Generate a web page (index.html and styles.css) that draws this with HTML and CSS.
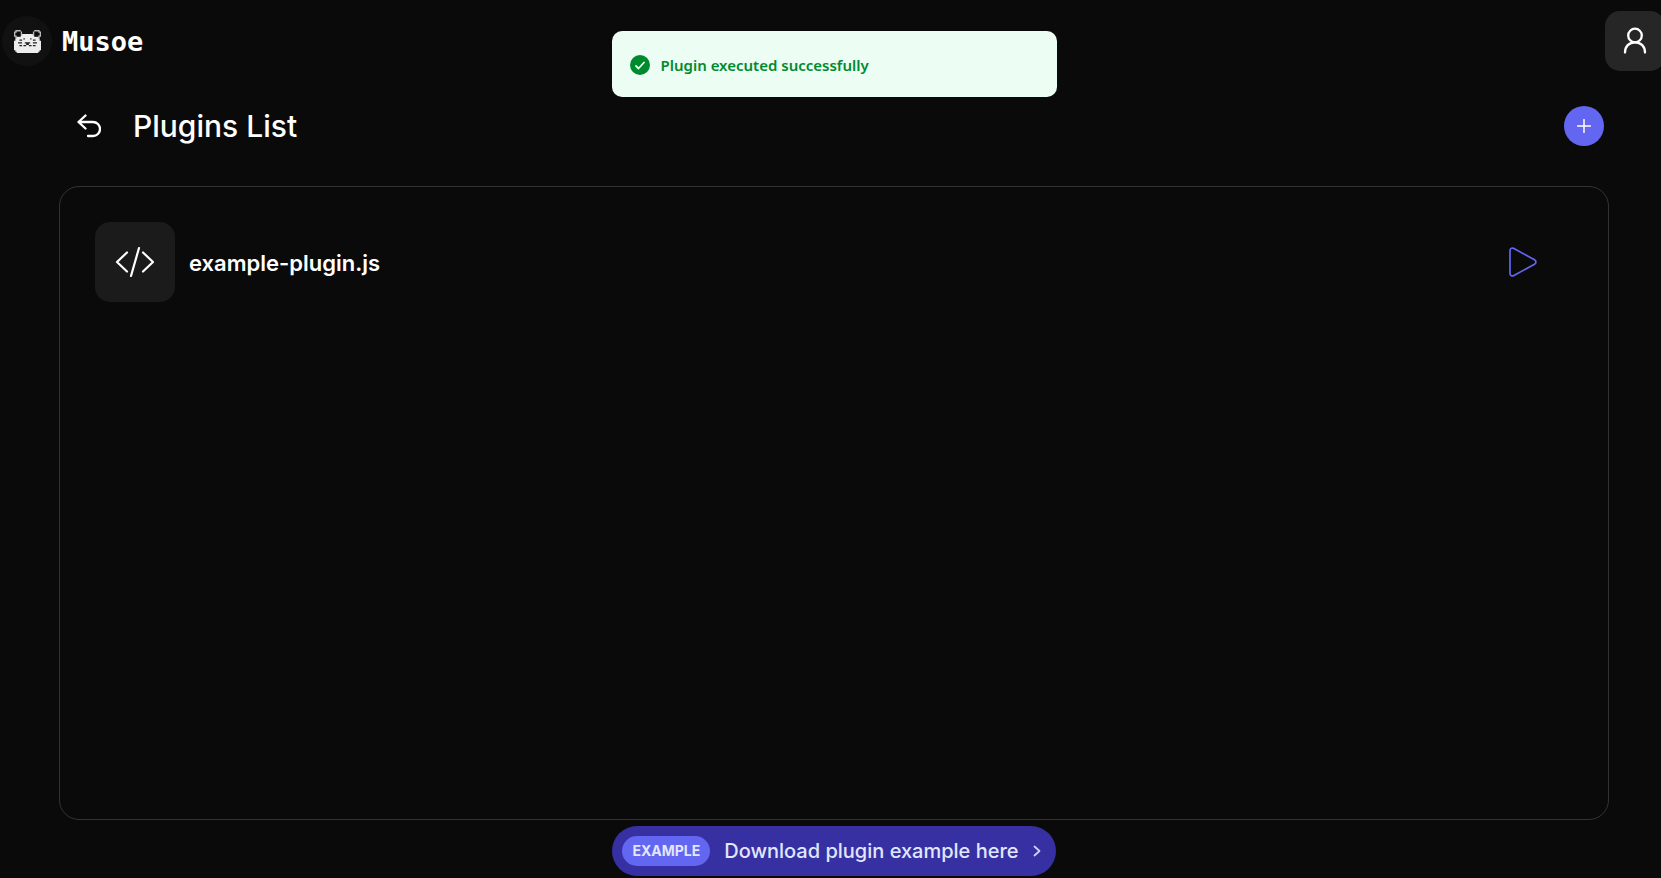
FILE: index.html
```html
<!DOCTYPE html>
<html lang="en">
<head>
<meta charset="utf-8">
<meta name="viewport" content="width=device-width, initial-scale=1">
<title>Musoe - Plugins</title>
<link rel="stylesheet" href="styles.css">
</head>
<body>
<div class="page">
  <header class="topbar">
    <a class="brand" href="#">
      <span class="brand-mark">
        <svg width="27" height="23" viewBox="0 0 20 17" aria-hidden="true">
          <path fill="#b9b9b9" d="M1 0h4v1h1v4H5v1H1V5H0V1h1zM15 0h4v1h1v4h-1v1h-4V5h-1V1h1z"/>
          <path fill="#ededed" d="M6 3h8v1h1v1h3v1h1v2h1v7h-1v1h-1v1H2v-1H1v-1H0V8h1V6h1V5h3V4h1z"/>
          <path fill="#0d0d0d" d="M2 1h3v4H2V4H1V2h1zM15 1h3v1h1v2h-1v1h-3z"/>
          <path fill="#222" d="M7 6h1v1H7zM12 6h1v1h-1zM4 7h2v1H4zM14 7h2v1h-2zM3 9h3v1H3zM14 9h3v1h-3zM4 11h2v1H4zM14 11h2v1h-2zM8 9h4v1h-1v1H9v-1H8zM7 11h2v1H7zM11 11h2v1h-2z"/>
        </svg>
      </span>
      <span class="brand-name">Musoe</span>
    </a>
    <button class="user-button" type="button" aria-label="Account">
      <svg width="24" height="28" viewBox="0 0 24 28" fill="none" stroke="#fff" stroke-width="2.300" stroke-linecap="round" aria-hidden="true">
        <circle cx="12" cy="8.500" r="6.800"/>
        <path d="M2 25.500c0-6 4-10.200 10-10.200s10 4.200 10 10.200"/>
      </svg>
    </button>
  </header>

  <div class="toast" role="status">
    <svg width="20" height="20" viewBox="0 0 20 20" aria-hidden="true">
      <circle cx="10" cy="10" r="10" fill="#008a2e"/>
      <path d="M6 11l2.500 2.500L14 7.500" fill="none" stroke="#ecfdf3" stroke-width="1.800" stroke-linecap="round" stroke-linejoin="round"/>
    </svg>
    <span>Plugin executed successfully</span>
  </div>

  <main class="content">
    <div class="heading">
      <button class="back-button" type="button" aria-label="Back">
        <svg width="24" height="24" viewBox="0 0 24 24" fill="none" stroke="#fff" stroke-width="2.300" stroke-linecap="round" stroke-linejoin="round" aria-hidden="true">
          <path d="M8.500 1.500L1.500 8l7 6.500M1.500 8H16a7 7 0 0 1 0 14h-5"/>
        </svg>
      </button>
      <h1>Plugins List</h1>
      <button class="add-button" type="button" aria-label="Add plugin">
        <svg width="14" height="14" viewBox="0 0 14 14" stroke="#fff" stroke-width="1.500" stroke-linecap="round" aria-hidden="true"><path d="M7 .5v13M.5 7h13"/></svg>
      </button>
    </div>

    <ul class="plugins">
      <li class="plugin">
        <span class="plugin-icon">
          <svg width="40" height="32" viewBox="0 0 40 32" fill="none" stroke="#fff" stroke-width="2.200" stroke-linecap="round" stroke-linejoin="round" aria-hidden="true">
            <path d="M12 6.500L2 16l10 9.500M28 6.500L38 16l-10 9.500M24 2l-8 28"/>
          </svg>
        </span>
        <span class="plugin-name">example-plugin.js</span>
        <button class="run-button" type="button" aria-label="Run example-plugin.js">
          <svg width="28" height="30" viewBox="0 0 28 30" fill="none" stroke="#6366f1" stroke-width="1.700" stroke-linejoin="round" aria-hidden="true">
            <path d="M1 3.500v23c0 1.900 1.600 3 3.500 2.200l21-11.500c1.900-1.100 1.900-3.300 0-4.400l-21-11.500C2.600 .5 1 1.600 1 3.500z"/>
          </svg>
        </button>
      </li>
    </ul>
  </main>

  <footer class="footer">
    <a class="download" href="#">
      <span class="badge">EXAMPLE</span>
      <span class="download-text">Download plugin example here</span>
      <svg width="8" height="12" viewBox="0 0 8 12" fill="none" stroke="#c7d2fe" stroke-width="1.800" stroke-linecap="round" stroke-linejoin="round" aria-hidden="true"><path d="M1.500 1.500L6.500 6l-5 4.500"/></svg>
    </a>
  </footer>
</div>
</body>
</html>
```
FILE: styles.css
```css
* {
  box-sizing: border-box;
}

body {
  margin: 0;
  overflow: hidden;
  background: #0a0a0a;
  color: #fff;
  font-family: Inter, "Liberation Sans", sans-serif;
}

button {
  display: flex;
  align-items: center;
  justify-content: center;
  padding: 0;
  border: 0;
  background: none;
  cursor: pointer;
}

a {
  color: inherit;
  text-decoration: none;
}

.page {
  display: flex;
  flex-direction: column;
  min-height: 100vh;
  margin-right: -7px;
  padding-bottom: 2px;
}

.topbar {
  display: flex;
  align-items: center;
  justify-content: space-between;
  padding: 11px 3px 0 2px;
}

.brand {
  display: flex;
  align-items: center;
  gap: 10px;
}

.brand-mark {
  display: flex;
  align-items: center;
  justify-content: center;
  width: 50px;
  height: 50px;
  border-radius: 50%;
  background: #111;
}

.brand-name {
  font: bold 27px "DejaVu Sans Mono", monospace;
}

.user-button {
  width: 60px;
  height: 60px;
  border-radius: 15px;
  background: #262626;
}

.toast {
  position: absolute;
  top: 31px;
  left: 50%;
  display: flex;
  align-items: center;
  gap: 11px;
  width: 445px;
  height: 66px;
  margin-left: -219px;
  padding: 1px 18px 0;
  border-radius: 10px;
  background: #ecfdf3;
  color: #008a2e;
  font: 600 15px "Noto Sans", sans-serif;
}

.content {
  display: flex;
  flex: 1;
  flex-direction: column;
  gap: 40px;
  padding: 35px 59px 6px;
}

.heading {
  display: flex;
  align-items: center;
  padding: 0 5px 0 10px;
}

.back-button {
  width: 40px;
  height: 40px;
}

h1 {
  flex: 1;
  margin: 0 0 0 24px;
  font-size: 30px;
  font-weight: 500;
  line-height: 40px;
}

.add-button {
  width: 40px;
  height: 40px;
  border-radius: 50%;
  background: #6366f1;
}

.plugins {
  flex: 1;
  margin: 0;
  padding: 35px;
  border: 1px solid #333;
  border-radius: 20px;
  list-style: none;
}

.plugin {
  display: flex;
  align-items: center;
  gap: 14px;
}

.plugin-icon {
  display: flex;
  align-items: center;
  justify-content: center;
  width: 80px;
  height: 80px;
  border-radius: 15px;
  background: #1b1b1b;
}

.plugin-name {
  flex: 1;
  padding-top: 2px;
  font-size: 22px;
  font-weight: 600;
}

.run-button {
  width: 100px;
  height: 60px;
}

.footer {
  display: flex;
  justify-content: center;
}

.download {
  display: flex;
  align-items: center;
  gap: 14px;
  height: 50px;
  padding: 0 15px 0 10px;
  border-radius: 25px;
  background: #3730a3;
  color: #e0e7ff;
}

.badge {
  padding: 0 10px;
  border-radius: 15px;
  background: #6366f1;
  font-size: 14px;
  font-weight: 700;
  line-height: 30px;
}

.download-text {
  font-size: 20px;
  font-weight: 500;
}
```
